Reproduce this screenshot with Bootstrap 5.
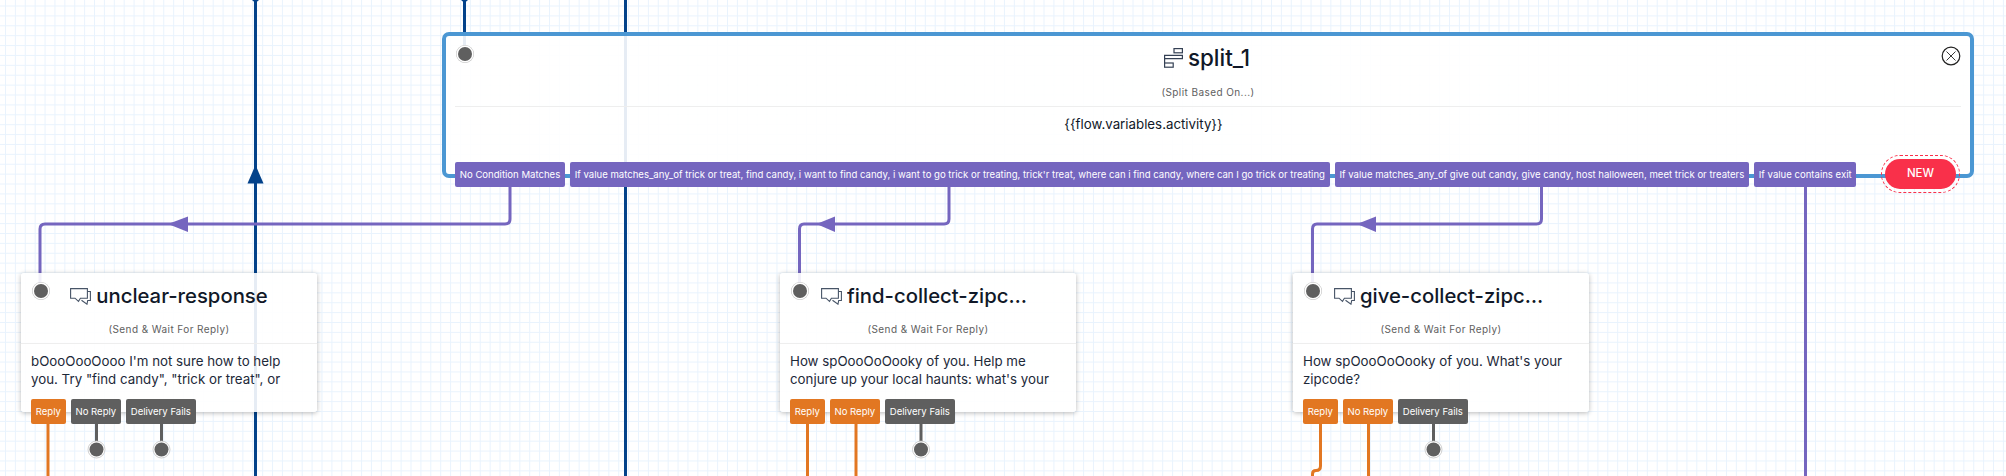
<!DOCTYPE html>
<html lang="en">
<head>
<meta charset="utf-8">
<title>Flow</title>
<link href="https://cdn.jsdelivr.net/npm/bootstrap@5.3.0/dist/css/bootstrap.min.css" rel="stylesheet">
<style>
html,body{margin:0;background:#fff;overflow:hidden}
body{font-family:Inter,"Liberation Sans",sans-serif;color:#101828}
.flow-canvas{position:relative;width:2006px;height:476px;overflow:hidden;background-color:#fff;
 background-image:linear-gradient(to right,#e9f3fd 1px,transparent 1px),linear-gradient(to bottom,#e9f3fd 1px,transparent 1px);
 background-size:9.9px 9.9px;background-position:5px 5.5px}
.flow-wires{position:absolute;inset:0;width:2006px;height:476px}
.flow-node{position:absolute;--bs-card-bg:rgba(255,255,255,.9);background:rgba(255,255,255,.9);border-radius:3px;box-shadow:0 1px 5px rgba(0,0,0,.28)}
.flow-split{left:442px;top:32px;width:1532px;height:146px;border:4px solid #4b97d3;border-radius:7px;box-shadow:none;background-clip:padding-box}
.flow-send{top:273px;width:296px;height:139px}
.flow-n1{left:21px}.flow-n2{left:780px}.flow-n3{left:1293px}
.flow-title{height:30px;gap:5px;font-size:20.3px;font-weight:500;line-height:30px}
.flow-send .flow-title{margin-top:8px}
.flow-split .flow-title{margin-top:7px;font-size:22.4px;padding-right:2px}
.flow-name{max-width:188px;color:#101828}
.flow-split .flow-name{max-width:none}
.flow-kind{font-size:10px;line-height:14px;letter-spacing:.42px;color:#606060;text-align:center}
.flow-send .flow-kind{margin-top:11px}
.flow-split .flow-kind{margin-top:12px}
.flow-rule{margin:0 10px;border:0;border-top:1px solid #eee;opacity:1;height:0}
.flow-send .flow-rule{margin-top:7px}
.flow-split .flow-rule{margin:7px 9px 0}
.flow-text{font-size:13.3px;line-height:18px;height:36px;overflow:hidden;margin:8px 10px 0;color:#1d2939}
.flow-expr{font-size:13.3px;line-height:18px;margin-top:8px;padding-right:129px;text-align:center;color:#101828}
.flow-ports{position:absolute;gap:5px;height:25px}
.flow-send .flow-ports{left:10px;top:126px}
.flow-split .flow-ports{left:9px;top:126px}
.flow-port{height:25px;line-height:25px;padding:0 4.75px;font-size:9.57px;color:#fff;border-radius:2px;white-space:nowrap}
.flow-p-purple{background:#7566bf}
.flow-p-orange{background:#e27722}
.flow-p-gray{background:#5f5f5f}
.flow-handle{position:absolute;width:14px;height:14px;border-radius:50%;background:#5f5f5f;box-shadow:0 0 0 1.5px #fff,0 0 0 2px #bbb}
.flow-send .flow-handle{left:13px;top:11px}
.flow-split .flow-handle{left:12px;top:11px}
.flow-close{position:absolute;right:9px;top:10px;width:20px;height:20px;line-height:0}
.flow-new{position:absolute;left:1439px;top:123px;width:71px;height:30px;border-radius:15px;background:#f9304a;color:#fff;font-size:11.5px;font-weight:500;outline:1px dashed #f9304a;outline-offset:3px}
</style>
</head>
<body>
<div class="flow-canvas">
<svg class="flow-wires" viewBox="0 0 2006 476" fill="none" stroke-width="3">
  <g stroke="#03428a">
    <path d="M255.5 0V476"/>
    <path d="M464.5 0V54"/>
    <path d="M625.5 0V476"/>
  </g>
  <g fill="#03428a">
    <path d="M255.5 165L263.5 183.5H247.5Z"/>
    <path d="M252 0H259L255.5 3Z"/>
    <path d="M461 0H468L464.5 3Z"/>
  </g>
  <g stroke="#7566bf">
    <path d="M510 187V219Q510 224 505 224H45Q40 224 40 229V290"/>
    <path d="M949 187V219Q949 224 944 224H804Q799.5 224 799.5 229V290"/>
    <path d="M1541.5 187V219Q1541.5 224 1536.5 224H1317Q1312.5 224 1312.5 229V290"/>
    <path d="M1805.5 187V476"/>
  </g>
  <g fill="#7566bf">
    <path d="M168 224L188 216.5V232Z"/>
    <path d="M816.5 224L835 216.5V232Z"/>
    <path d="M1357 224L1376 216.5V232Z"/>
  </g>
  <g stroke="#e27722">
    <path d="M48 424V476"/>
    <path d="M807.5 424V476"/>
    <path d="M856 424V476"/>
    <path d="M1320.5 424V466Q1320.5 470.5 1316 470.5Q1312.5 470.5 1312.5 474V476"/>
    <path d="M1368.5 424V476"/>
  </g>
  <g stroke="#5f5f5f">
    <path d="M96.5 424V449"/>
    <path d="M161.5 424V449"/>
    <path d="M921 424V449"/>
    <path d="M1433.5 424V449"/>
  </g>
  <g>
    <circle cx="96.5" cy="449.5" r="8.5" fill="#fff" stroke="#bbb" stroke-width=".7"/><circle cx="96.5" cy="449.5" r="7" fill="#5f5f5f"/>
    <circle cx="161.5" cy="449.5" r="8.5" fill="#fff" stroke="#bbb" stroke-width=".7"/><circle cx="161.5" cy="449.5" r="7" fill="#5f5f5f"/>
    <circle cx="921" cy="449.5" r="8.5" fill="#fff" stroke="#bbb" stroke-width=".7"/><circle cx="921" cy="449.5" r="7" fill="#5f5f5f"/>
    <circle cx="1433.5" cy="449.5" r="8.5" fill="#fff" stroke="#bbb" stroke-width=".7"/><circle cx="1433.5" cy="449.5" r="7" fill="#5f5f5f"/>
  </g>
</svg>

<div class="card flow-node flow-split">
  <span class="flow-handle"></span>
  <div class="flow-title d-flex align-items-center justify-content-center">
    <svg width="19" height="20" viewBox="0 0 19 20" fill="none" stroke="#344054" stroke-width="1.2"><rect x="10" y=".6" width="8.4" height="4.2"/><path d="M.6 7.4H18.4V10.6H.6Z"/><path d="M.6 10.6V15"/><rect x=".6" y="15" width="8.6" height="4.2"/></svg>
    <span class="flow-name">split_1</span>
  </div>
  <div class="flow-kind">(Split Based On...)</div>
  <hr class="flow-rule">
  <div class="flow-expr">{{flow.variables.activity}}</div>
  <span class="flow-close"><svg width="20" height="20" viewBox="0 0 20 20" fill="none" stroke="#222"><circle cx="10" cy="10" r="8.8" stroke-width="1.2"/><path d="M5.5 5.5L14.5 14.5M14.5 5.5L5.5 14.5" stroke-width=".9"/></svg></span>
  <div class="flow-ports d-flex">
    <div class="flow-port flow-p-purple">No Condition Matches</div>
    <div class="flow-port flow-p-purple">If value matches_any_of trick or treat, find candy, i want to find candy, i want to go trick or treating, trick'r treat, where can i find candy, where can I go trick or treating</div>
    <div class="flow-port flow-p-purple">If value matches_any_of give out candy, give candy, host halloween, meet trick or treaters</div>
    <div class="flow-port flow-p-purple">If value contains exit</div>
  </div>
  <div class="flow-new d-flex align-items-center justify-content-center">NEW</div>
</div>

<div class="card border-0 flow-node flow-send flow-n1">
  <span class="flow-handle"></span>
  <div class="flow-title d-flex align-items-center justify-content-center">
    <svg width="21" height="17" viewBox="0 0 21 17" fill="none" stroke="#475467" stroke-width="1.1"><path d="M.6.6H17.4V10.2H10.4L8.5 13.4L5 10.2H.6Z"/><path d="M17.4 3.5H20.4V12.5H17.7L17 16.2L11.5 12.2"/></svg>
    <span class="flow-name text-truncate">unclear-response</span>
  </div>
  <div class="flow-kind">(Send &amp; Wait For Reply)</div>
  <hr class="flow-rule">
  <div class="flow-text">bOooOooOooo I'm not sure how to help you. Try "find candy", "trick or treat", or "exit" to leave.</div>
  <div class="flow-ports d-flex">
    <div class="flow-port flow-p-orange">Reply</div>
    <div class="flow-port flow-p-gray">No Reply</div>
    <div class="flow-port flow-p-gray">Delivery Fails</div>
  </div>
</div>

<div class="card border-0 flow-node flow-send flow-n2">
  <span class="flow-handle"></span>
  <div class="flow-title d-flex align-items-center justify-content-center">
    <svg width="21" height="17" viewBox="0 0 21 17" fill="none" stroke="#475467" stroke-width="1.1"><path d="M.6.6H17.4V10.2H10.4L8.5 13.4L5 10.2H.6Z"/><path d="M17.4 3.5H20.4V12.5H17.7L17 16.2L11.5 12.2"/></svg>
    <span class="flow-name text-truncate">find-collect-zipcode</span>
  </div>
  <div class="flow-kind">(Send &amp; Wait For Reply)</div>
  <hr class="flow-rule">
  <div class="flow-text">How spOooOoOooky of you. Help me conjure up your local haunts: what's your zipcode?</div>
  <div class="flow-ports d-flex">
    <div class="flow-port flow-p-orange">Reply</div>
    <div class="flow-port flow-p-orange">No Reply</div>
    <div class="flow-port flow-p-gray">Delivery Fails</div>
  </div>
</div>

<div class="card border-0 flow-node flow-send flow-n3">
  <span class="flow-handle"></span>
  <div class="flow-title d-flex align-items-center justify-content-center">
    <svg width="21" height="17" viewBox="0 0 21 17" fill="none" stroke="#475467" stroke-width="1.1"><path d="M.6.6H17.4V10.2H10.4L8.5 13.4L5 10.2H.6Z"/><path d="M17.4 3.5H20.4V12.5H17.7L17 16.2L11.5 12.2"/></svg>
    <span class="flow-name text-truncate">give-collect-zipcode</span>
  </div>
  <div class="flow-kind">(Send &amp; Wait For Reply)</div>
  <hr class="flow-rule">
  <div class="flow-text">How spOooOoOooky of you. What's your zipcode?</div>
  <div class="flow-ports d-flex">
    <div class="flow-port flow-p-orange">Reply</div>
    <div class="flow-port flow-p-orange">No Reply</div>
    <div class="flow-port flow-p-gray">Delivery Fails</div>
  </div>
</div>
</div>
<script src="https://cdn.jsdelivr.net/npm/bootstrap@5.3.0/dist/js/bootstrap.bundle.min.js"></script>
</body>
</html>
